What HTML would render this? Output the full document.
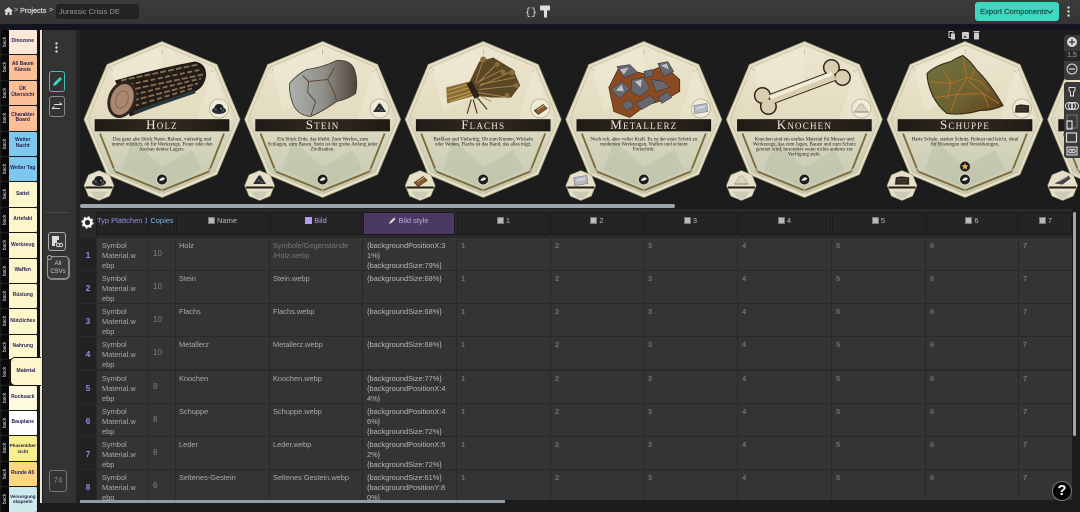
<!DOCTYPE html>
<html lang="de"><head><meta charset="utf-8"><title>Jurassic Crisis DE</title>
<style>
*{box-sizing:border-box}
html,body{margin:0;padding:0;width:1080px;height:503px;overflow:hidden;background:#1c1c1c;font-family:"Liberation Sans","DejaVu Sans",sans-serif}
.a{position:absolute}
#top{left:0;top:0;width:1080px;height:24px;background:linear-gradient(#3c3c3c,#343434)}
#band{left:0;top:24px;width:1080px;height:6px;background:#15131f}
.tab{position:absolute;left:9px;width:28.5px;height:24.4px;border-radius:0 2px 2px 0;font-size:5px;line-height:5.6px;font-weight:bold;color:#2a2350;text-align:center;display:flex;align-items:center;justify-content:center;border-right:1px solid #111;overflow:hidden}
.bk{position:absolute;left:1px;width:8px;height:24.4px;background:#080808;border-radius:3px 0 0 3px;color:#ddd}
.bk span{position:absolute;left:-5px;top:9px;width:18px;text-align:center;font-size:5px;line-height:6px;transform:rotate(-90deg)}
.r{position:absolute;left:0;width:1072px;height:32px;font-size:7.4px;line-height:10px;color:#aaa}
.r div{position:absolute;top:0;height:32px;background:#343434;overflow:hidden}
.r .n{left:80px;width:16px;background:#222;color:#8d8de0;font-size:8.5px;font-weight:bold;text-align:center;line-height:34px}
.r .t{left:97px;width:51px;padding:3px 0 0 5px}
.r .k{left:149px;width:26px;padding:11px 0 0 4px;color:#808080;font-size:8px}
.r .m{left:176px;width:93px;padding:3px 0 0 3px}
.r .b{left:270px;width:92px;padding:3px 0 0 3px}
.r .s{left:363px;width:93px;padding:3px 0 0 4px;color:#b8b8b8}
.r .d{padding:3px 0 0 4px;color:#707070;font-weight:bold}
.d1{left:457px;width:93px}.d2{left:551px;width:92px}.d3{left:644px;width:93px}.d4{left:738px;width:93px}.d5{left:832px;width:93px}.d6{left:926px;width:92px}.d7{left:1019px;width:53px}
.h{position:absolute;top:212px;height:23px;background:#242424;border:1px solid #1a1a1a;font-size:7.5px;line-height:15px;text-align:center;color:#bbb;white-space:nowrap;overflow:hidden}
.ic{display:inline-block;width:7px;height:7px;background:#bbb;border:1px solid #777;margin-right:2px;vertical-align:-1px}
.btn{position:absolute;border:1px solid #8a8a8a;border-radius:3px}
</style></head><body>
<div class="a" id="top"></div><div class="a" id="band"></div>
<svg class="a" style="left:4px;top:7px" width="9" height="8" viewBox="0 0 9 8"><path d="M4.500 0L0 4h1.300v4h2.300V5.300h1.800V8h2.300V4H9z" fill="#ddd"/></svg>
<div class="a" style="left:14px;top:5px;font-size:7px;line-height:12px;color:#ccc">&gt;</div>
<div class="a" style="left:20px;top:5px;font-size:7.300px;line-height:12px;color:#ddd;-webkit-text-stroke:.2px #ddd">Projects</div>
<div class="a" style="left:49px;top:5px;font-size:7px;line-height:12px;color:#ddd">&gt;</div>
<div class="a" style="left:56px;top:4px;width:83px;height:15px;background:#232323;border-radius:3px;font-size:7.500px;line-height:15px;color:#999;padding-left:3px;white-space:nowrap">Jurassic Crisis DE</div>
<svg class="a" style="left:524px;top:4px" width="30" height="15" viewBox="0 0 30 15"><text x="1" y="11" font-family="Liberation Mono,monospace" font-size="10" fill="#ddd">{}</text><path d="M16 2.500q0-1 1-1h8q1 0 1 1v3q0 1-1 1h-8q-1 0-1-1z" fill="#ddd"/><path d="M20 6.500h3v7h-3z" fill="#ddd"/></svg>
<div class="a" style="left:975px;top:2px;width:84px;height:19px;background:#3ed9c0;border-radius:3px;font-size:7.600px;line-height:19px;color:#1f4f48;padding-left:5px;white-space:nowrap;-webkit-text-stroke:.2px #1f4f48">Export Components</div>
<svg class="a" style="left:1046px;top:9px" width="8" height="5"><path d="M1 1l3 3 3-3" stroke="#1f4f48" fill="none" stroke-width="1.200"/></svg>
<svg class="a" style="left:1066px;top:6px" width="5" height="11"><circle cx="2.500" cy="1.500" r="1.200" fill="#ddd"/><circle cx="2.500" cy="5.500" r="1.200" fill="#ddd"/><circle cx="2.500" cy="9.500" r="1.200" fill="#ddd"/></svg>

<!-- tabs -->
<div class="a" style="left:38px;top:30px;width:2px;height:325px;background:#111"></div>
<div class="a" style="left:40px;top:30px;width:2px;height:473px;background:#e8e4d4"></div>
<div class="bk" style="top:30px"><span>back</span></div><div class="tab" style="top:30px;background:#fde8d8">Dinozone</div>
<div class="bk" style="top:55.400px"><span>back</span></div><div class="tab" style="top:55.400px;background:#fdbf95">A6 Baum Känste</div>
<div class="bk" style="top:80.800px"><span>back</span></div><div class="tab" style="top:80.800px;background:#fdbf95">ÜK Übersicht</div>
<div class="bk" style="top:106.200px"><span>back</span></div><div class="tab" style="top:106.200px;background:#fdbf95">Charakter Board</div>
<div class="bk" style="top:131.600px"><span>back</span></div><div class="tab" style="top:131.600px;background:#7ec8ef">Wetter Nacht</div>
<div class="bk" style="top:157px"><span>back</span></div><div class="tab" style="top:157px;background:#7ec8ef">Wetter Tag</div>
<div class="bk" style="top:182.400px"><span>back</span></div><div class="tab" style="top:182.400px;background:#fdf6cc">Sattel</div>
<div class="bk" style="top:207.800px"><span>back</span></div><div class="tab" style="top:207.800px;background:#fdf6cc">Artefakt</div>
<div class="bk" style="top:233.200px"><span>back</span></div><div class="tab" style="top:233.200px;background:#fdf6cc">Werkzeug</div>
<div class="bk" style="top:258.600px"><span>back</span></div><div class="tab" style="top:258.600px;background:#fdf6cc">Waffen</div>
<div class="bk" style="top:284px"><span>back</span></div><div class="tab" style="top:284px;background:#fdf6cc">Rüstung</div>
<div class="bk" style="top:309.400px"><span>back</span></div><div class="tab" style="top:309.400px;background:#fdf6cc">Nützliches</div>
<div class="bk" style="top:334.800px"><span>back</span></div><div class="tab" style="top:334.800px;background:#fdf6cc">Nahrung</div>
<div class="bk" style="top:360.200px"><span>back</span></div><div class="tab" style="top:357px;left:10px;width:31px;height:29px;background:#fdf6cc;border:1px solid #111;border-right:0;border-radius:5px 0 0 5px;z-index:2">Material</div>
<div class="bk" style="top:385.600px"><span>back</span></div><div class="tab" style="top:385.600px;background:#fdfae0">Rucksack</div>
<div class="bk" style="top:411px"><span>back</span></div><div class="tab" style="top:411px;background:#fff">Bauplane</div>
<div class="bk" style="top:436.400px"><span>back</span></div><div class="tab" style="top:436.400px;background:#f8ef8d;font-size:4.600px">Phasenüber sicht</div>
<div class="bk" style="top:461.800px"><span>back</span></div><div class="tab" style="top:461.800px;background:#fdd680">Runde A5</div>
<div class="bk" style="top:487.200px"><span>back</span></div><div class="tab" style="top:487.200px;background:#cdeaec;font-size:4.600px">Versorgung skapseln</div>

<!-- sidebar -->
<div class="a" style="left:43px;top:30px;width:33px;height:473px;background:#333"></div>
<div class="a" style="left:76px;top:30px;width:4px;height:473px;background:#232323"></div>
<svg class="a" style="left:54px;top:42px" width="5" height="11"><circle cx="2.500" cy="1.500" r="1.200" fill="#ddd"/><circle cx="2.500" cy="5.500" r="1.200" fill="#ddd"/><circle cx="2.500" cy="9.500" r="1.200" fill="#ddd"/></svg>
<div class="btn" style="left:49px;top:71px;width:16px;height:21px;border-color:#3ec4ae"></div>
<svg class="a" style="left:51px;top:75px" width="12" height="13"><path d="M2 11l1-3 6-6 2 2-6 6z" fill="#3ed9c0"/></svg>
<div class="btn" style="left:49px;top:96px;width:16px;height:21px"></div>
<svg class="a" style="left:51px;top:100px" width="12" height="13" fill="none" stroke="#ddd" stroke-width="1"><path d="M3 4.500h8M8.500 2.500l2.500 2M9 8.500H1M3.500 6.500L1 8.500"/></svg>
<div class="a" style="left:45px;top:212px;width:25px;height:1px;background:#4a4a4a"></div>
<div class="btn" style="left:48px;top:232px;width:18px;height:19px;border-color:#aaa;background:#3a3a3a"></div>
<svg class="a" style="left:51px;top:235px" width="12" height="13"><path d="M1 1h7v4H6v3H4v3H1z" fill="#ddd"/><circle cx="7" cy="10" r="1.700" fill="none" stroke="#ddd"/><circle cx="10" cy="10" r="1.700" fill="none" stroke="#ddd"/></svg>
<div class="a" style="left:47px;top:256px;width:23px;height:24px;border:1px solid #999;border-right:2px solid #888;border-bottom:2px solid #888;border-radius:5px;background:#3a3a3a;font-size:6px;line-height:8px;color:#ccc;text-align:center;padding-top:3px">All<br>CSVs</div>
<div class="a" style="left:47px;top:255px;width:5px;height:5px;border:1px solid #aaa;border-radius:50%;background:#333"></div>
<div class="btn" style="left:49px;top:470px;width:18px;height:22px;border-color:#777;font-size:8px;line-height:20px;color:#888;text-align:center">74</div>

<!-- cards -->
<svg class="a" style="left:77px;top:30px" width="1003" height="173" viewBox="77 30 1003 173" font-family="Liberation Serif,serif">
<defs>
<filter id="s" x="-10%" y="-10%" width="120%" height="120%"><feGaussianBlur stdDeviation=".35"/></filter>
<linearGradient id="cg" x1="0" y1="0" x2="0" y2="1"><stop offset="0" stop-color="#ece6cf"/><stop offset=".45" stop-color="#e4dcc0"/><stop offset=".6" stop-color="#d8d7bf"/><stop offset="1" stop-color="#c3c8b1"/></linearGradient>
<linearGradient id="ban" x1="0" y1="0" x2="1" y2="0"><stop offset="0" stop-color="#1f1a15"/><stop offset=".5" stop-color="#342b22"/><stop offset="1" stop-color="#1f1a15"/></linearGradient>
<linearGradient id="rk" x1="0" y1="0" x2="1" y2="0"><stop offset="0" stop-color="#adb1ac"/><stop offset=".5" stop-color="#8f908a"/><stop offset="1" stop-color="#50463a"/></linearGradient>
<linearGradient id="scg" x1="0" y1="0" x2="1" y2="1"><stop offset="0" stop-color="#6f7440"/><stop offset=".6" stop-color="#6d6230"/><stop offset="1" stop-color="#5e3e1e"/></linearGradient>
<g id="bg">
<path d="M0-78L55-55 78 0 55 55 0 78-55 55-78 0-55-55Z" fill="#e6e0c6" stroke="#a9a283" stroke-width=".8"/>
<path d="M0-74.500L52.700-52.700 74.500 0 52.700 52.700 0 74.500-52.700 52.700-74.500 0-52.700-52.700Z" fill="url(#cg)" stroke="#bdb693" stroke-width=".6"/>
<path d="M-51-51L0-72V-30L-40-8ZM51-51L70 0H35Z" fill="#f3eedc" opacity=".4"/>
<path d="M-30 20L0 48 30 30 40 50 0 68-40 50Z" fill="#b9c0a6" opacity=".5"/>
<path d="M-62 14L-47 52 0 71 47 52 62 14" fill="none" stroke="#7d6a38" stroke-width="1.800"/>
<rect x="-67" y="0" width="134" height="11.500" fill="url(#ban)" stroke="#15110d" stroke-width=".6"/>
<g font-size="8" fill="#8b8570" text-anchor="middle" stroke="#fff" stroke-width=".15">
<text y="-65">1</text><text transform="translate(50,-48) rotate(45)">2</text><text transform="translate(-50,-48) rotate(-45)">3</text><text x="-72" y="3">7</text><text x="72" y="3" font-size="6">23</text><text transform="translate(48,53)" font-size="6">4</text><text transform="translate(-48,53)" font-size="6">6</text><text y="75" font-size="6">5</text>
</g>
<circle cx="0" cy="60" r="5.500" fill="#1d1d1d" stroke="#d8d2b8" stroke-width="1"/><path d="M-3 61q3-5 6-2-2 3-6 2z" fill="#eee"/>
<circle cx="57" cy="-11" r="9.500" fill="#efecda" stroke="#b5ae90" stroke-width=".8"/>
</g>
<g id="mb"><path d="M0-15L10.600-10.600 15 0 10.600 10.600 0 15-10.600 10.600-15 0-10.600-10.600Z" fill="#e6e0c8" stroke="#8f886d" stroke-width=".6"/><rect x="-13.500" y="1" width="27" height="2" fill="#221c16"/><path d="M-9 6h18l-6 7h-6z" fill="#c9cdb6"/></g>
<g id="coal"><ellipse cx="0" cy="2" rx="7" ry="3.500" fill="#2a2c33"/><ellipse cx="0" cy="-1" rx="4.500" ry="3.500" fill="#1c1d22"/><circle cx="-3" cy="1" r="1" fill="#777"/><circle cx="2" cy="0" r="1" fill="#888"/><circle cx="4" cy="2" r="1" fill="#666"/></g>
<g id="cone"><path d="M-6.500 3.500L-1-5h2l5.500 8.500z" fill="#2d2e33"/><circle cx="-1" cy="0" r=".9" fill="#777"/><circle cx="2" cy="1.800" r=".9" fill="#777"/></g>
<g id="lea"><path d="M-6 2l9-6 4 4-9 6z" fill="#8a5a2e" stroke="#3e2712" stroke-width=".6"/><path d="M-3 1l7-4" stroke="#d5ae79" stroke-width="1"/></g>
<g id="ing"><path d="M-7-3L6-5 7 3-6 5z" fill="#b6b8c4" stroke="#777" stroke-width=".6"/><path d="M-4 0l8-2" stroke="#eee"/></g>
<g id="pale"><path d="M-7 3.500L-2-4 1-5 7 3.500z" fill="#d9d2c0" stroke="#a09786" stroke-width=".5"/><path d="M-7 3.500H7" stroke="#8a8070"/></g>
<g id="dlea"><path d="M-7 4L-6-3-1-4 7-3 7 4z" fill="#2e2722" stroke="#5a4c40" stroke-width=".5"/><path d="M-5-1h10M-5 1.500h10" stroke="#77665a" stroke-width=".5"/></g>
<g id="flint"><path d="M-8 3L6-5 8-2 0 4z" fill="#44454a"/><path d="M-4 1L5-4" stroke="#aaa"/></g>
</defs>

<!-- Holz -->
<g transform="translate(162,119.500)"><use href="#bg"/>
<g filter="url(#s)">
<path d="M-47-39Q-5-51 33-58Q45-56 44-43Q42-32 33-28L-32-3Z" fill="#241d17"/>
<g stroke="#8a6e52" stroke-width="1.800" fill="none"><path d="M-41-39L36-55" stroke-dasharray="6 2"/><path d="M-38-34L40-50" stroke-dasharray="5 2.500" stroke-dashoffset="3"/><path d="M-35-29L41-45" stroke-dasharray="6 2"/><path d="M-32-24L39-41" stroke-dasharray="5 2.500" stroke-dashoffset="4"/><path d="M-29-19L36-36" stroke-dasharray="6 2"/><path d="M-26-14L30-31" stroke-dasharray="5 3" stroke-dashoffset="2"/></g>
<path d="M-28-7L33-28" stroke="#26393a" stroke-width="3.500"/>
<ellipse cx="-40" cy="-20" rx="14" ry="19" transform="rotate(20 -40 -20)" fill="#33261c"/>
<ellipse cx="-40" cy="-20" rx="11" ry="16" transform="rotate(20 -40 -20)" fill="#a98770"/>
<ellipse cx="-40" cy="-20" rx="6" ry="9" transform="rotate(20 -40 -20)" fill="none" stroke="#87674f"/>
</g>
<use href="#coal" x="57" y="-11"/>
<text y="9.500" text-anchor="middle" font-size="13" fill="#f0ead8" letter-spacing="1.200" style="font-variant:small-caps">Holz</text>
<g font-size="5" text-anchor="middle" fill="#211c14"><text y="21">Das ganz alte Stück Natur. Robust, vielseitig und</text><text y="26">immer nützlich, ob für Werkzeuge, Feuer oder den</text><text y="31">Ausbau deines Lagers.</text></g>
<g transform="translate(-63,66)"><use href="#mb"/><use href="#coal" y="-5"/></g></g>

<!-- Stein -->
<g transform="translate(322.600,119.500)"><use href="#bg"/>
<g filter="url(#s)">
<path d="M-33-36Q-27-44-16-50Q0-52 14-59Q26-60 31-52Q36-40 33-26Q24-20 14-18Q0-8-12-3Q-24-4-29-14Q-34-26-33-36Z" fill="url(#rk)" stroke="#3f3328" stroke-width=".8"/>
<path d="M-20-44L-14-38-15-27-7-18-12-3M-14-38L5-40 12-26 14-18M5-40L12-52" fill="none" stroke="#5f4a38" stroke-width="1"/>
</g>
<use href="#cone" x="57" y="-11"/>
<text y="9.500" text-anchor="middle" font-size="13" fill="#f0ead8" letter-spacing="1.200" style="font-variant:small-caps">Stein</text>
<g font-size="5" text-anchor="middle" fill="#211c14"><text y="21">Ein Stück Erde, das bleibt. Zum Werfen, zum</text><text y="26">Schlagen, zum Bauen. Stein ist der grobe Anfang jeder</text><text y="31">Zivilisation.</text></g>
<g transform="translate(-63,66)"><use href="#mb"/><use href="#cone" y="-5"/></g></g>

<!-- Flachs -->
<g transform="translate(483.200,119.500)"><use href="#bg"/>
<g filter="url(#s)">
<path d="M-14-37L-4-58 10-62 30-50 37-34 28-22 8-22-8-24Z" fill="#5a4628"/>
<path d="M-37-32L-14-38-8-24-36-16Z" fill="#8a6c34"/>
<g stroke="#d2ab5c" stroke-width=".9" fill="none"><path d="M-36-29L-12-36"/><path d="M-36-25L-10-33"/><path d="M-35-21L-9-29"/><path d="M-33-18L-9-26"/></g>
<g stroke="#a8864a" stroke-width=".9" fill="none"><path d="M-8-36L0-60"/><path d="M-6-36L14-56"/><path d="M-4-33L28-48"/><path d="M-4-30L34-34"/><path d="M-6-27L26-22"/><path d="M-8-26L8-18"/><path d="M-4-38L20-50"/><path d="M-3-35L32-42"/></g>
<g fill="#8d6a3a"><circle cx="0" cy="-60" r="3"/><circle cx="14" cy="-55" r="2.500"/><circle cx="29" cy="-47" r="3"/><circle cx="33" cy="-34" r="2.500"/><circle cx="24" cy="-24" r="2.500"/><circle cx="20" cy="-47" r="2.500"/></g>
<path d="M-14-37L-6-22" stroke="#2e2014" stroke-width="6"/><path d="M-10-20L-6-6M-12-20L-16-6M-6-22L4-10" stroke="#4a3a28" stroke-width="1.200"/>
</g>
<use href="#lea" x="57" y="-11"/>
<text y="9.500" text-anchor="middle" font-size="13" fill="#f0ead8" letter-spacing="1.200" style="font-variant:small-caps">Flachs</text>
<g font-size="5" text-anchor="middle" fill="#211c14"><text y="21">Reißfest und Vielseitig. Ob zum Knoten, Wickeln</text><text y="26">oder Weben, Flachs ist das Band, das alles trägt.</text></g>
<g transform="translate(-63,66)"><use href="#mb"/><use href="#lea" y="-5"/></g></g>

<!-- Metallerz -->
<g transform="translate(643.800,119.500)"><use href="#bg"/>
<g filter="url(#s)">
<path d="M-35-32L-25-52 0-46 20-54 36-40 36-28 22-20 2-14-14-2-30-8Z" fill="#8a4c22" stroke="#2e1c10" stroke-width=".6"/>
<g fill="#66686e" stroke="#2c2c30" stroke-width=".5"><path d="M-27-53L-14-55-6-47-20-42Z"/><path d="M-33-30L-22-38-14-31-24-21Z"/><path d="M-12-40L0-42 6-31-4-23-13-28Z"/><path d="M14-56L24-58 30-48 20-43Z"/><path d="M8-40L20-38 26-32 12-28Z"/><path d="M-8-16L6-24 12-18-2-10Z"/><path d="M14-22L24-28 28-22 18-16Z"/><path d="M-22-16L-14-20-10-13-18-9Z"/><path d="M0-48L8-50 10-44 2-42Z"/></g>
<g fill="#bfc0c8"><path d="M-24-50L-15-52-20-45Z"/><path d="M-9-38L-2-40-3-32Z"/><path d="M-28-29L-22-35-20-28Z"/><path d="M17-54L23-56 25-50Z"/></g>
</g>
<use href="#ing" x="57" y="-11"/>
<text y="9.500" text-anchor="middle" font-size="13" fill="#f0ead8" letter-spacing="1.200" style="font-variant:small-caps">Metallerz</text>
<g font-size="5" text-anchor="middle" fill="#211c14"><text y="21">Noch roh, aber voller Kraft. Es ist der erste Schritt zu</text><text y="26">modernen Werkzeugen, Waffen und echtem</text><text y="31">Fortschritt.</text></g>
<g transform="translate(-63,66)"><use href="#mb"/><use href="#ing" y="-5"/></g></g>

<!-- Knochen -->
<g transform="translate(804.400,119.500)"><use href="#bg"/>
<g filter="url(#s)">
<g stroke="#2e261c" fill="#2e261c"><path d="M-34-20L30-44" stroke-width="11"/><circle cx="-42" cy="-24" r="8"/><circle cx="-36" cy="-13" r="8"/><circle cx="27" cy="-52" r="8"/><circle cx="38" cy="-42" r="8"/></g>
<g stroke="#d9cfb0" fill="#d9cfb0"><path d="M-34-20L30-44" stroke-width="9"/><circle cx="-42" cy="-24" r="6.500"/><circle cx="-36" cy="-13" r="6.500"/><circle cx="27" cy="-52" r="6.500"/><circle cx="38" cy="-42" r="6.500"/></g>
<path d="M-34-22L28-46" stroke="#f2ecd8" stroke-width="3.500"/>
</g>
<use href="#pale" x="57" y="-11"/>
<text y="9.500" text-anchor="middle" font-size="13" fill="#f0ead8" letter-spacing="1.200" style="font-variant:small-caps">Knochen</text>
<g font-size="5" text-anchor="middle" fill="#211c14"><text y="21">Knochen sind ein uraltes Material für Messer und</text><text y="26">Werkzeuge, das zum Jagen, Bauen und zum Schutz</text><text y="31">genutzt wird, besonders wenn nichts anderes zur</text><text y="36">Verfügung steht.</text></g>
<g transform="translate(-63,66)"><use href="#mb"/><use href="#pale" y="-5"/></g></g>

<!-- Schuppe -->
<g transform="translate(965,119.500)"><use href="#bg"/>
<g filter="url(#s)">
<path d="M-38-46Q-30-54-14-58Q-8-62-2-64Q6-58 12-49Q24-38 38-14Q28-9 15-9Q-2-4-18-6Q-26-12-32-23Q-38-36-38-46Z" fill="url(#scg)" stroke="#2e2212" stroke-width="1"/>
<g fill="none" stroke="#b96f28" stroke-width=".9"><path d="M-2-62L2-42-8-25-14-8"/><path d="M10-50L4-38 18-26 24-12"/><path d="M-34-38L-14-36 2-42"/><path d="M-30-22L-8-25 18-26 34-16"/><path d="M-22-50L-14-36-18-20"/><path d="M2-42L16-38 24-28"/></g>
</g>
<use href="#dlea" x="57" y="-11"/>
<text y="9.500" text-anchor="middle" font-size="13" fill="#f0ead8" letter-spacing="1.200" style="font-variant:small-caps">Schuppe</text>
<g font-size="5" text-anchor="middle" fill="#211c14"><text y="21">Harte Schale, starker Schutz. Robust und leicht, ideal</text><text y="26">für Rüstungen und Verstärkungen.</text></g>
<circle cx="0" cy="47" r="5" fill="#1d1d1d"/><path d="M0 43.500l1 2.300 2.500.2-1.900 1.600.6 2.400-2.200-1.300-2.200 1.300.6-2.400-1.900-1.600 2.500-.2z" fill="#e9b72e"/>
<g transform="translate(-63,66)"><use href="#mb"/><use href="#dlea" y="-5"/></g></g>

<!-- next card -->
<g transform="translate(1125.600,119.500)"><use href="#bg"/>
<g transform="translate(-63,66)"><use href="#mb"/><use href="#flint" y="-5"/></g></g>
</svg>

<!-- card toolbar -->
<svg class="a" style="left:947px;top:30px" width="36" height="11" fill="#ccc"><path d="M2 1.500h4v6H2z" fill="none" stroke="#ccc"/><path d="M4 3.500h4v6H4z"/><rect x="15" y="2" width="7" height="7" rx="1"/><path d="M16 7.500l2-2 2 2z" fill="#333"/><rect x="27" y="2.500" width="5" height="7" rx=".6"/><rect x="26.500" y="1" width="6" height="1"/></svg>
<div class="a" style="left:1064px;top:35px;width:16px;height:45px;background:#3a3a3a;border-radius:3px 0 0 3px"></div>
<div class="a" style="left:1064px;top:51px;width:16px;height:10px;background:#252525;font-size:7px;line-height:10px;color:#aaa;text-align:center">1,5</div>
<svg class="a" style="left:1064px;top:35px" width="16" height="45"><circle cx="8" cy="7" r="5" fill="#ddd"/><path d="M5 7h6M8 4v6" stroke="#333" stroke-width="1.200"/><circle cx="8" cy="34" r="5" fill="none" stroke="#ddd"/><path d="M5 34h6" stroke="#ddd" stroke-width="1.200"/></svg>
<div class="a" style="left:1064px;top:82px;width:16px;height:76px;background:#3a3a3a;border-radius:3px 0 0 3px"></div>
<svg class="a" style="left:1064px;top:82px" width="16" height="76" fill="none" stroke="#ddd"><path d="M5 5.500h6v3L9.500 10v4h-3v-4L5 8.500z"/><ellipse cx="5" cy="24" rx="3.500" ry="3.500"/><ellipse cx="8" cy="24" rx="3.500" ry="3.500"/><ellipse cx="11" cy="24" rx="3.500" ry="3.500"/><rect x="3" y="33" width="10" height="13" stroke="#777"/><rect x="3" y="39" width="5" height="8" stroke-width="1.200"/><rect x="2.500" y="51" width="10" height="9" stroke-width="1.200"/><rect x="3" y="65" width="10" height="8" fill="#555"/><circle cx="6.500" cy="69" r="1.800"/><circle cx="9.500" cy="69" r="1.800"/></svg>

<!-- scrollbar -->
<div class="a" style="left:80px;top:204px;width:595px;height:4px;border-radius:2px;background:#9aa7ae"></div>

<!-- table header -->
<div class="a" style="left:80px;top:209px;width:992px;height:291px;background:#292929"></div>
<svg class="a" style="left:81px;top:216px" width="13" height="13"><circle cx="6.500" cy="6.500" r="3.800" fill="none" stroke="#fff" stroke-width="2.400"/><circle cx="6.500" cy="6.500" r="5.200" fill="none" stroke="#fff" stroke-width="1.800" stroke-dasharray="2 2.080"/></svg>
<div class="h" style="left:96px;width:52px;color:#8f8fe8">Typ Plättchen 1</div>
<div class="h" style="left:149px;width:26px;color:#7fb2e8">Copies</div>
<div class="h" style="left:176px;width:93px"><span class="ic"></span>Name</div>
<div class="h" style="left:270px;width:92px;color:#b39cf0"><span class="ic" style="background:#b39cf0;border-color:#b39cf0"></span>Bild</div>
<div class="h" style="left:363px;width:92px;background:#4a3a63;color:#b8a8d8"><svg width="7" height="7" style="vertical-align:-1px"><path d="M0 7l1-2.500L5 .5 6.500 2 2.500 6z" fill="#ddd"/></svg> Bild style</div>
<div class="h d1"><span class="ic"></span>1</div><div class="h d2"><span class="ic"></span>2</div><div class="h d3"><span class="ic"></span>3</div><div class="h d4"><span class="ic"></span>4</div><div class="h d5"><span class="ic"></span>5</div><div class="h d6"><span class="ic"></span>6</div><div class="h d7"><span class="ic"></span>7</div>

<!-- rows -->
<div class="r" style="top:238px"><div class="n">1</div><div class="t">Symbol<br>Material.w<br>ebp</div><div class="k">10</div><div class="m">Holz</div><div class="b" style="color:#777">Symbole/Gegenstände<br>/Holz.webp</div><div class="s">{backgroundPositionX:3<br>1%}<br>{backgroundSize:79%}</div><div class="d d1">1</div><div class="d d2">2</div><div class="d d3">3</div><div class="d d4">4</div><div class="d d5">5</div><div class="d d6">6</div><div class="d d7">7</div></div>
<div class="r" style="top:271px"><div class="n">2</div><div class="t">Symbol<br>Material.w<br>ebp</div><div class="k">10</div><div class="m">Stein</div><div class="b">Stein.webp</div><div class="s">{backgroundSize:68%}</div><div class="d d1">1</div><div class="d d2">2</div><div class="d d3">3</div><div class="d d4">4</div><div class="d d5">5</div><div class="d d6">6</div><div class="d d7">7</div></div>
<div class="r" style="top:304px"><div class="n">3</div><div class="t">Symbol<br>Material.w<br>ebp</div><div class="k">10</div><div class="m">Flachs</div><div class="b">Flachs.webp</div><div class="s">{backgroundSize:68%}</div><div class="d d1">1</div><div class="d d2">2</div><div class="d d3">3</div><div class="d d4">4</div><div class="d d5">5</div><div class="d d6">6</div><div class="d d7">7</div></div>
<div class="r" style="top:337px"><div class="n">4</div><div class="t">Symbol<br>Material.w<br>ebp</div><div class="k">10</div><div class="m">Metallerz</div><div class="b">Metallerz.webp</div><div class="s">{backgroundSize:68%}</div><div class="d d1">1</div><div class="d d2">2</div><div class="d d3">3</div><div class="d d4">4</div><div class="d d5">5</div><div class="d d6">6</div><div class="d d7">7</div></div>
<div class="r" style="top:370.500px"><div class="n">5</div><div class="t">Symbol<br>Material.w<br>ebp</div><div class="k">8</div><div class="m">Knochen</div><div class="b">Knochen.webp</div><div class="s">{backgroundSize:77%}<br>{backgroundPositionX:4<br>4%}</div><div class="d d1">1</div><div class="d d2">2</div><div class="d d3">3</div><div class="d d4">4</div><div class="d d5">5</div><div class="d d6">6</div><div class="d d7">7</div></div>
<div class="r" style="top:403.500px"><div class="n">6</div><div class="t">Symbol<br>Material.w<br>ebp</div><div class="k">8</div><div class="m">Schuppe</div><div class="b">Schuppe.webp</div><div class="s">{backgroundPositionX:4<br>6%}<br>{backgroundSize:72%}</div><div class="d d1">1</div><div class="d d2">2</div><div class="d d3">3</div><div class="d d4">4</div><div class="d d5">5</div><div class="d d6">6</div><div class="d d7">7</div></div>
<div class="r" style="top:436.500px"><div class="n">7</div><div class="t">Symbol<br>Material.w<br>ebp</div><div class="k">8</div><div class="m">Leder</div><div class="b">Leder.webp</div><div class="s">{backgroundPositionX:5<br>2%}<br>{backgroundSize:72%}</div><div class="d d1">1</div><div class="d d2">2</div><div class="d d3">3</div><div class="d d4">4</div><div class="d d5">5</div><div class="d d6">6</div><div class="d d7">7</div></div>
<div class="r" style="top:470px;height:30px"><div class="n" style="height:30px">8</div><div class="t" style="height:30px">Symbol<br>Material.w<br>ebp</div><div class="k" style="height:30px">6</div><div class="m" style="height:30px">Seltenes-Gestein</div><div class="b" style="height:30px">Seltenes Gestein.webp</div><div class="s" style="height:30px">{backgroundSize:61%}<br>{backgroundPositionY:8<br>0%}</div><div class="d d1" style="height:30px">1</div><div class="d d2" style="height:30px">2</div><div class="d d3" style="height:30px">3</div><div class="d d4" style="height:30px">4</div><div class="d d5" style="height:30px">5</div><div class="d d6" style="height:30px">6</div><div class="d d7" style="height:30px">7</div></div>

<div class="a" style="left:1073px;top:212px;width:3px;height:224px;border-radius:2px;background:#9aa7ae"></div>
<div class="a" style="left:80px;top:500px;width:425px;height:3px;background:#8f9ca3"></div>
<div class="a" style="left:1052px;top:481px;width:20px;height:20px;border-radius:50%;background:#050505;border:1px solid #777;color:#fff;font-size:15px;font-weight:bold;line-height:18px;text-align:center">?</div>
</body></html>
